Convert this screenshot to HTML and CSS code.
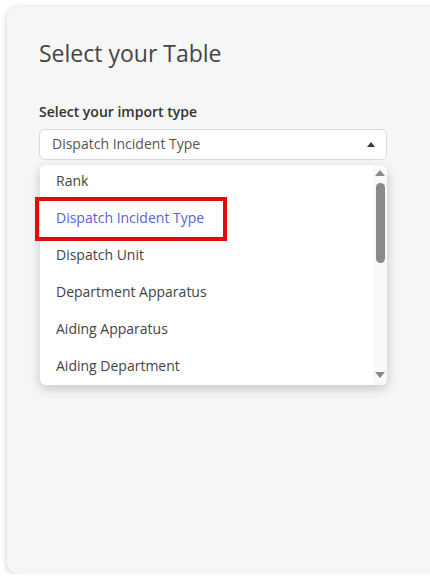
FILE: index.html
```html
<!DOCTYPE html>
<html>
<head>
<meta charset="utf-8">
<link rel="stylesheet" href="styles.css">
</head>
<body>
<div class="card">
  <h1 class="title">Select your Table</h1>
  <label class="label">Select your import type</label>
  <div class="select">
    <span class="select-value">Dispatch Incident Type</span>
    <span class="caret"></span>
  </div>
  <div class="dropdown">
    <ul class="options">
      <li class="option">Rank</li>
      <li class="option active">Dispatch Incident Type<span class="highlight"></span></li>
      <li class="option">Dispatch Unit</li>
      <li class="option">Department Apparatus</li>
      <li class="option">Aiding Apparatus</li>
      <li class="option">Aiding Department</li>
    </ul>
    <div class="scrollbar">
      <span class="arrow up"></span>
      <div class="track"><div class="thumb"></div></div>
      <span class="arrow down"></span>
    </div>
  </div>
</div>
</body>
</html>
```
FILE: styles.css
```css
html, body {
  margin: 0;
  padding: 0;
  background: #ffffff;
  font-family: "Open Sans", "Noto Sans", sans-serif;
  overflow: hidden;
}
.card {
  margin: 7px 0 0 7px;
  width: 440px;
  height: 567px;
  box-sizing: border-box;
  background: #f6f6f6;
  border-radius: 12px;
  box-shadow: 0 1px 6px rgba(0,0,0,0.22);
  padding: 32px 0 0 32px;
  display: flex;
  flex-direction: column;
}
.title {
  margin: 0;
  font-size: 23px;
  font-weight: 400;
  color: #454545;
  line-height: 29px;
}
.label {
  margin-top: 34px;
  font-size: 14px;
  font-weight: 600;
  color: #333333;
  line-height: 20px;
}
.select {
  margin-top: 7px;
  width: 348px;
  height: 31px;
  box-sizing: border-box;
  background: #ffffff;
  border: 1px solid #d9d9d9;
  border-radius: 6px;
  display: flex;
  align-items: center;
  justify-content: space-between;
  padding: 0 11px 0 12px;
}
.select-value {
  font-size: 14px;
  color: #555555;
  line-height: 20px;
  margin-top: -1px;
}
.caret {
  width: 0;
  height: 0;
  border-left: 4.5px solid transparent;
  border-right: 4.5px solid transparent;
  border-bottom: 5px solid #3a3a3a;
}
.dropdown {
  margin-top: 5px;
  margin-left: 1px;
  width: 347px;
  height: 220px;
  background: #ffffff;
  border-radius: 6px;
  box-shadow: 0 4px 12px rgba(0,0,0,0.2);
  display: flex;
}
.options {
  list-style: none;
  margin: 0;
  padding: 0;
  flex: 1;
  height: 220px;
}
.option {
  position: relative;
  height: 37px;
  line-height: 31px;
  padding-left: 16px;
  font-size: 14px;
  color: #444444;
}
.option:last-child {
  height: 35px;
}
.option.active {
  color: #5863d3;
}
.highlight {
  position: absolute;
  left: -5px;
  top: -5px;
  width: 184px;
  height: 36px;
  border: 4px solid #e20a0a;
}
.scrollbar {
  width: 14px;
  background: #f9f9f9;
  border-radius: 0 6px 6px 0;
  display: flex;
  flex-direction: column;
  align-items: center;
  padding: 5px 0 7px;
  box-sizing: border-box;
}
.arrow {
  width: 0;
  height: 0;
  border-left: 5px solid transparent;
  border-right: 5px solid transparent;
}
.arrow.up {
  border-bottom: 6px solid #8a8a8a;
}
.arrow.down {
  border-top: 6px solid #8a8a8a;
}
.track {
  flex: 1;
  width: 100%;
  display: flex;
  justify-content: center;
  padding-top: 7px;
}
.thumb {
  width: 9px;
  height: 80px;
  border-radius: 5px;
  background: #8a8a8a;
}
```
